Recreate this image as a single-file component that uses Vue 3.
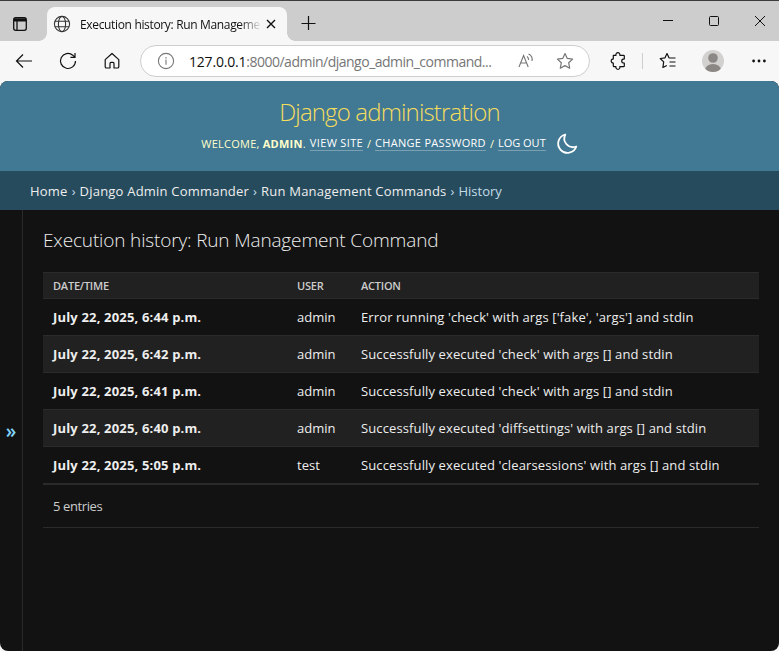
<script setup>
const entries = [
  { date: 'July 22, 2025, 6:44 p.m.', user: 'admin', action: "Error running 'check' with args ['fake', 'args'] and stdin" },
  { date: 'July 22, 2025, 6:42 p.m.', user: 'admin', action: "Successfully executed 'check' with args [] and stdin" },
  { date: 'July 22, 2025, 6:41 p.m.', user: 'admin', action: "Successfully executed 'check' with args [] and stdin" },
  { date: 'July 22, 2025, 6:40 p.m.', user: 'admin', action: "Successfully executed 'diffsettings' with args [] and stdin" },
  { date: 'July 22, 2025, 5:05 p.m.', user: 'test', action: "Successfully executed 'clearsessions' with args [] and stdin" },
]
</script>

<template>
  <div class="window">
    <div class="tabbar">
      <svg class="workspaces" width="16" height="16" viewBox="0 0 16 16" fill="none" stroke="#111" stroke-width="1.3">
        <rect x="1.7" y="1.7" width="12.6" height="12.6" rx="2" />
        <path d="M2 3.2h12M2 4.6h12" stroke-width="1.8" /><path d="M5 5v9" />
      </svg>
      <div class="tab">
        <svg width="18" height="18" viewBox="0 0 18 18" fill="none" stroke="#333" stroke-width="1.1">
          <circle cx="9" cy="9" r="7.6" /><ellipse cx="9" cy="9" rx="3.6" ry="7.6" />
          <path d="M2 6.3h14M2 11.7h14" />
        </svg>
        <span class="tab-title">Execution history: Run Manageme</span>
        <svg class="tab-close" width="10" height="10" viewBox="0 0 10 10" stroke="#111" stroke-width="1.4"><path d="M1 1l8 8M9 1l-8 8" /></svg>
      </div>
      <svg class="newtab" width="16" height="16" viewBox="0 0 16 16" stroke="#111" stroke-width="1.2"><path d="M7.5 1v14M.5 8.500h14" /></svg>
      <div class="controls">
        <svg width="12" height="12" viewBox="0 0 12 12" stroke="#111"><path d="M1 5.5h10" /></svg>
        <svg width="12" height="12" viewBox="0 0 12 12" stroke="#111" fill="none"><rect x="1.5" y="1.5" width="9" height="9" rx="1" /></svg>
        <svg width="12" height="12" viewBox="0 0 12 12" stroke="#111"><path d="M1 1l10 10M11 1L1 11" /></svg>
      </div>
    </div>

    <div class="toolbar">
      <svg class="back" width="18" height="16" viewBox="0 0 18 16" fill="none" stroke="#111" stroke-width="1.2"><path d="M17 8H1.5M8 1.5L1.5 8 8 14.5" /></svg>
      <svg class="reload" width="18" height="18" viewBox="0 0 18 18" fill="none" stroke="#111" stroke-width="1.2"><path d="M16.5 9A7.5 7.5 0 1 1 13.8 3.2L16 5.4M16 1v4.4h-4.6" /></svg>
      <svg class="home" width="16" height="18" viewBox="0 0 16 18" fill="none" stroke="#111" stroke-width="1.2" stroke-linejoin="round"><path d="M1.2 7.6L8 1.5l6.8 6.1v7.1q0 1.3-1.3 1.3H10v-4.6q0-1-1-1H7q-1 0-1 1V16H2.5q-1.3 0-1.3-1.3z" /></svg>
      <div class="address">
        <svg class="info" width="18" height="18" viewBox="0 0 18 18" fill="none" stroke="#777" stroke-width="1.1"><circle cx="9" cy="9" r="7.6" /><path d="M9 7.6v5.2M9 5v1.4" /></svg>
        <span class="url"><b>127.0.0.1</b>:8000/admin/django_admin_command...</span>
        <svg class="read" width="17" height="16" viewBox="0 0 17 16" fill="none" stroke="#767676" stroke-width="1.1"><path d="M1 14L5.600 2.500l4.600 11.500M2.600 10h6M9 3.500q1.800 1.200 1.500 3.500M10.500 1q4.500 2 3.500 7" /></svg>
        <svg class="star" width="18" height="18" viewBox="0 0 18 18" fill="none" stroke="#767676" stroke-width="1.2" stroke-linejoin="round"><path d="M9 1.5l2.3 4.9 5.300.7-3.9 3.700 1 5.400L9 13.6l-4.7 2.600 1-5.4L1.4 7.1l5.300-.7z" /></svg>
      </div>
      <svg class="ext" width="16" height="18" viewBox="0 0 16 18" fill="none" stroke="#111" stroke-width="1.2" stroke-linejoin="round"><path d="M3.300 3.300H6a2 2 0 1 1 3.800 0h3.700q.8 0 .8.800v2.800q-2.600 0-2.600 2.100t2.600 2.100v2.800q0 .8-.8.800H9.800a2 2 0 1 1-3.800 0H4.100q-.8 0-.8-.8v-2.800a2 2 0 1 1 0-4.200z" /></svg>
      <span class="divider"></span>
      <svg class="favs" width="18" height="18" viewBox="0 0 18 18" fill="none" stroke="#111" stroke-width="1.2" stroke-linejoin="round"><path d="M11 6L10 5.800 8 1.500 6 5.800l-4.800.7 3.500 3.400-.8 5.600 3.900-2M11 6h5.500M10.500 10h6M10.500 14h6" /></svg>
      <svg class="avatar" width="22" height="22" viewBox="0 0 22 22"><clipPath id="face"><circle cx="11" cy="11" r="11" /></clipPath><g clip-path="url(#face)"><rect width="22" height="22" fill="#d3d1cf" /><g fill="#8b8784"><circle cx="11" cy="8" r="4.800" /><ellipse cx="11" cy="20" rx="8" ry="6" /></g></g></svg>
      <svg class="more" width="14" height="4" viewBox="0 0 14 4" fill="#111"><circle cx="1.600" cy="2" r="1.400" /><circle cx="7" cy="2" r="1.400" /><circle cx="12.400" cy="2" r="1.400" /></svg>
    </div>

    <div class="page">
      <header>
        <h1>Django administration</h1>
        <div class="tools">
          <span class="welcome">WELCOME, <strong>ADMIN</strong>.</span>
          <a class="t-site">VIEW SITE</a><i>/</i><a class="t-pass">CHANGE PASSWORD</a><i>/</i><a class="t-out">LOG OUT</a>
          <svg width="22" height="22" viewBox="0 0 22 22" fill="none" stroke="#fff" stroke-width="1.800" stroke-linejoin="round"><path d="M9.300 1.500A9.300 9.300 0 1 0 20.300 13.500A8.700 8.700 0 0 1 9.300 1.500z" /></svg>
        </div>
      </header>
      <nav><a>Home</a><i>›</i><a>Django Admin Commander</a><i>›</i><a>Run Management Commands</a><i>›</i><span>History</span></nav>
      <div class="main">
        <aside>»</aside>
        <section>
          <h2>Execution history: Run Management Command</h2>
          <div class="table">
            <div class="row head"><span>DATE/TIME</span><span>USER</span><span>ACTION</span></div>
            <div v-for="e in entries" :key="e.date" class="row">
              <strong>{{ e.date }}</strong><span>{{ e.user }}</span><span class="action">{{ e.action }}</span>
            </div>
          </div>
          <p>5 entries</p>
        </section>
      </div>
    </div>
  </div>
</template>

<style>
body { margin: 0; background: #f7f7f7; }
</style>

<style scoped>
* { box-sizing: border-box; }
.window { width: 779px; height: 651px; overflow: hidden; display: flex; flex-direction: column; background: #f7f7f7; font-family: "Open Sans", "Noto Sans", sans-serif; white-space: nowrap; }
svg { flex: none; display: block; }
i { font-style: normal; }
.tabbar { height: 41px; flex: none; border-top: 1px solid #3c3a3c; background: #cdcdcd; display: flex; align-items: flex-start; }
.workspaces { margin: 15px 0 0 12px; }
.tab { position: relative; margin: 6px 0 0 19px; width: 240px; height: 34px; border-radius: 8px 8px 0 0; background: #f7f7f7; display: flex; align-items: center; padding-left: 6px; }
.tab::before, .tab::after { content: ""; position: absolute; bottom: 0; width: 8px; height: 8px; }
.tab::before { left: -8px; background: radial-gradient(circle at 0 0, transparent 7.5px, #f7f7f7 8px); }
.tab::after { right: -8px; background: radial-gradient(circle at 100% 0, transparent 7.5px, #f7f7f7 8px); }
.tab-title { width: 180px; margin-left: 9px; font-size: 12px; letter-spacing: -.34px; color: #111; -webkit-mask-image: linear-gradient(90deg, #000 160px, transparent 182px); mask-image: linear-gradient(90deg, #000 160px, transparent 182px); }
.tab-close { margin-left: 6px; }
.newtab { margin: 14px 0 0 14px; }
.controls { margin: 14px 13px 0 auto; display: flex; gap: 34px; }
.toolbar { height: 40px; flex: none; display: flex; align-items: center; }
.back { margin-left: 15px; }
.reload { margin-left: 26px; }
.home { margin-left: 27px; }
.address { width: 450px; height: 32px; margin-left: 20px; border: 1px solid #cecece; border-radius: 16px; background: #fff; display: flex; align-items: center; padding-left: 16px; }
.url { width: 305px; margin-left: 14px; font-size: 14px; letter-spacing: -.5px; color: #767676; }
.url b { color: #111; font-weight: 400; letter-spacing: -.2px; }
.read { margin-left: 24px; }
.star { margin-left: 21px; }
.ext { margin-left: 20px; }
.divider { width: 1px; height: 16px; margin-left: 16px; background: #cecece; }
.favs { margin-left: 16px; }
.avatar { margin-left: 25px; }
.more { margin-left: 28px; }
.page { flex: 1; border-radius: 8px; overflow: hidden; background: #121212; display: flex; flex-direction: column; }
header { height: 90px; flex: none; background: #417893; display: flex; flex-direction: column; align-items: center; color: #ffc; }
h1 { margin: 15px 0 0; font-size: 24px; line-height: 32px; font-weight: 300; letter-spacing: -.84px; color: #f5dd5d; }
.tools { height: 24px; margin-top: 3px; display: flex; align-items: center; font-size: 11px; line-height: 15px; }
.tools a { color: #fff; border-bottom: 1px solid #7ba0b2; }
.tools i { width: 12px; text-align: center; }
.welcome { margin-right: 4px; letter-spacing: .25px; }
.t-site { letter-spacing: .35px; }
.t-pass { letter-spacing: .3px; }
.tools svg { margin: 2px 0 0 10px; }
nav { height: 39px; flex: none; background: #264b5d; padding-left: 30px; display: flex; align-items: center; font-size: 13px; color: #c4dce8; }
nav a { color: #eee; letter-spacing: .21px; }
nav i { width: 12px; text-align: center; }
.main { flex: 1; display: flex; }
aside { width: 23px; border-right: 1px solid #2a2a2a; display: flex; align-items: center; justify-content: center; font-size: 19px; font-weight: 600; color: #81d4fa; }
section { flex: 1; padding: 17px 20px 0; color: #eee; }
h2 { margin: 0 0 18px; font-size: 19px; line-height: 27px; font-weight: 300; letter-spacing: -.15px; }
.row { height: 37px; border-top: 1px solid #2b2b2b; display: grid; grid-template-columns: 244px 64px 1fr; align-items: center; padding-left: 10px; font-size: 13px; }
.row:nth-child(odd) { background: #212121; }
.row strong { letter-spacing: .17px; }
.action { letter-spacing: .12px; }
.head { height: 26px; font-size: 11px; font-weight: 600; letter-spacing: -.22px; color: #ccc; }
p { margin: 0; height: 45px; border-top: 2px solid #2b2b2b; border-bottom: 1px solid #2b2b2b; padding-left: 10px; font-size: 13px; line-height: 43px; letter-spacing: -.4px; color: #ccc; }
</style>
